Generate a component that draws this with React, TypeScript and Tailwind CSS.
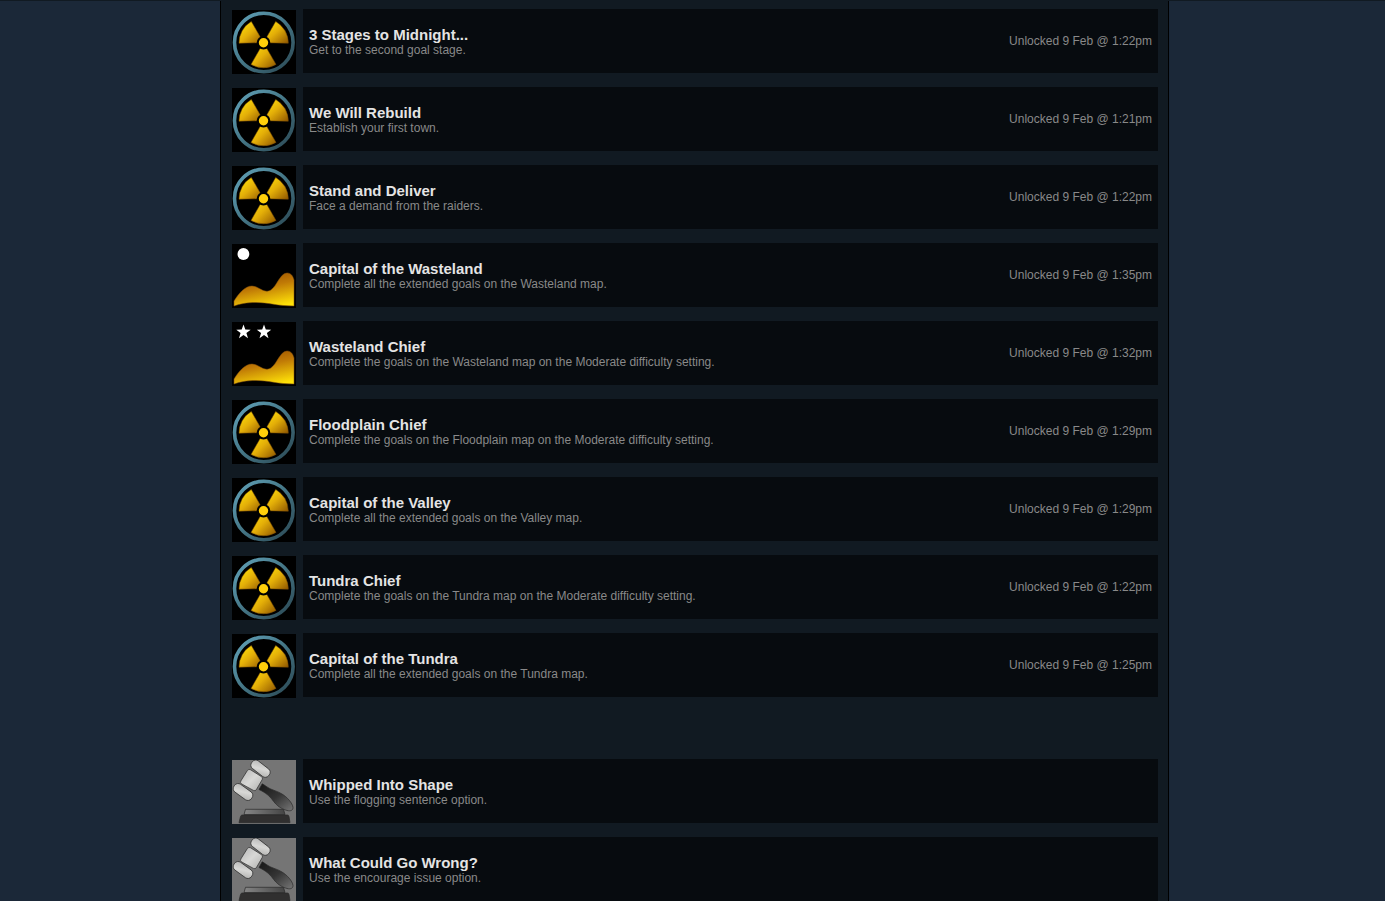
import { useId } from "react";

type IconName = "radiation" | "moon" | "stars" | "gavel";

type Achievement = {
  icon: IconName;
  title: string;
  description: string;
  unlocked?: string;
};

const unlockedList: Achievement[] = [
  { icon: "radiation", title: "3 Stages to Midnight...", description: "Get to the second goal stage.", unlocked: "9 Feb @ 1:22pm" },
  { icon: "radiation", title: "We Will Rebuild", description: "Establish your first town.", unlocked: "9 Feb @ 1:21pm" },
  { icon: "radiation", title: "Stand and Deliver", description: "Face a demand from the raiders.", unlocked: "9 Feb @ 1:22pm" },
  { icon: "moon", title: "Capital of the Wasteland", description: "Complete all the extended goals on the Wasteland map.", unlocked: "9 Feb @ 1:35pm" },
  { icon: "stars", title: "Wasteland Chief", description: "Complete the goals on the Wasteland map on the Moderate difficulty setting.", unlocked: "9 Feb @ 1:32pm" },
  { icon: "radiation", title: "Floodplain Chief", description: "Complete the goals on the Floodplain map on the Moderate difficulty setting.", unlocked: "9 Feb @ 1:29pm" },
  { icon: "radiation", title: "Capital of the Valley", description: "Complete all the extended goals on the Valley map.", unlocked: "9 Feb @ 1:29pm" },
  { icon: "radiation", title: "Tundra Chief", description: "Complete the goals on the Tundra map on the Moderate difficulty setting.", unlocked: "9 Feb @ 1:22pm" },
  { icon: "radiation", title: "Capital of the Tundra", description: "Complete all the extended goals on the Tundra map.", unlocked: "9 Feb @ 1:25pm" },
];

const lockedList: Achievement[] = [
  { icon: "gavel", title: "Whipped Into Shape", description: "Use the flogging sentence option." },
  { icon: "gavel", title: "What Could Go Wrong?", description: "Use the encourage issue option." },
];

function RadiationIcon() {
  const id = useId();
  return (
    <svg viewBox="0 0 64 64" className="size-16 bg-black" aria-hidden="true">
      <defs>
        <linearGradient id={id + "blade"} x1="0" y1="0" x2="1" y2="1">
          <stop offset="0.1" stopColor="#ffdf0a" />
          <stop offset="0.5" stopColor="#e3ae08" />
          <stop offset="1" stopColor="#8f5600" />
        </linearGradient>
        <linearGradient id={id + "ring"} x1="0" y1="0" x2="1" y2="1">
          <stop offset="0" stopColor="#62a3ba" />
          <stop offset="0.5" stopColor="#447585" />
          <stop offset="1" stopColor="#2a4651" />
        </linearGradient>
      </defs>
      <circle cx="31.8" cy="32.5" r="29.3" fill="none" stroke={`url(#${id}ring)`} strokeWidth="3.6" />
      <g fill={`url(#${id}blade)`} stroke="#7a4c04" strokeWidth="0.5">
        <path d="M31.5 32.7 7 33.2A25 25 0 0 1 19.3 11.4Z" />
        <path d="M31.5 32.7 43.7 11.4A25 25 0 0 1 56.3 33.2Z" />
        <path d="M31.5 32.7 44 54.4A25 25 0 0 1 19 54.4Z" />
      </g>
      <circle cx="31.5" cy="32.7" r="6.8" fill="#000" />
      <circle cx="31.5" cy="32.7" r="4.7" fill="#ffcf0a" />
    </svg>
  );
}

function DesertIcon({ stars }: { stars?: boolean }) {
  const id = useId();
  const star = "0,-7.6 1.8,-2.4 7.2,-2.3 2.9,1 4.5,6.2 0,3.1 -4.5,6.2 -2.9,1 -7.2,-2.3 -1.8,-2.4";
  return (
    <svg viewBox="0 0 64 64" className="size-16 bg-black" aria-hidden="true">
      <defs>
        <linearGradient id={id} x1="0.4" y1="0.1" x2="0.75" y2="1">
          <stop offset="0" stopColor="#a35a00" />
          <stop offset="0.35" stopColor="#c07a06" />
          <stop offset="1" stopColor="#ffe208" />
        </linearGradient>
      </defs>
      {stars ? (
        <g fill="#fff">
          <polygon points={star} transform="translate(11.5 10)" />
          <polygon points={star} transform="translate(32 10)" />
        </g>
      ) : (
        <circle cx="11.4" cy="10" r="5.9" fill="#fff" />
      )}
      <path
        d="M2 62V57C7 49 13 42 20 42C26 42 29 47 35 47.3C44 47 47 29 55 29C59 29 61 32 62 36V62C46 62 36 58.5 24 58.5C14 58.5 8 60 2 62Z"
        fill={`url(#${id})`}
        stroke="#84500c"
        strokeWidth="0.5"
      />
    </svg>
  );
}

function GavelIcon() {
  const id = useId();
  return (
    <svg viewBox="0 0 64 64" className="size-16 bg-[#757575]" aria-hidden="true">
      <defs>
        <linearGradient id={id + "head"} x1="0" y1="0" x2="1" y2="1">
          <stop offset="0" stopColor="#b4b4b4" />
          <stop offset="0.5" stopColor="#d8d8d6" />
          <stop offset="1" stopColor="#b0b0ae" />
        </linearGradient>
        <linearGradient id={id + "handle"} x1="0" y1="0" x2="1" y2="1">
          <stop offset="0" stopColor="#161616" />
          <stop offset="0.5" stopColor="#343434" />
          <stop offset="1" stopColor="#777" />
        </linearGradient>
        <linearGradient id={id + "base"}>
          <stop offset="0" stopColor="#868686" />
          <stop offset="1" stopColor="#444" />
        </linearGradient>
      </defs>
      <g stroke="#2a2a2a" strokeWidth="0.7" strokeLinejoin="round">
        <path d="M13.5 49.3H51.5L53 54.5H12Z" fill={`url(#${id}base)`} />
        <path d="M10 55H55.5Q56.8 55 57 56.5L58 62.7H7L8.5 56.5Q9 55 10 55Z" fill="#302f2f" />
        <path d="M30.2 23.8C33 25 35 27.5 38 28.7C42 30.5 46 31.5 50 34C55 37 60.5 43 61 47.5C61 51 57.5 51.5 53.5 50C47 47.8 43.5 44 40.5 40C37.5 36 34 33 27 29.5Z" fill={`url(#${id}handle)`} />
        <path d="M15.5 10.3Q16.8 8.7 18.6 9.8L29.4 16.6Q31.2 17.8 30.2 19.6L24.4 29.6Q23.3 31.4 21.4 30.4L9.6 23.9Q7.8 22.8 8.8 21Z" fill={`url(#${id}head)`} />
        <rect x="-10.7" y="-4.8" width="21.4" height="9.6" rx="4.2" transform="translate(28.5 8.7) rotate(38)" fill={`url(#${id}head)`} />
        <rect x="-10.7" y="-4.8" width="21.4" height="9.6" rx="4.2" transform="translate(11 32) rotate(36)" fill={`url(#${id}head)`} />
      </g>
    </svg>
  );
}

function AchievementIcon({ name }: { name: IconName }) {
  if (name === "gavel") return <GavelIcon />;
  if (name === "moon") return <DesertIcon />;
  if (name === "stars") return <DesertIcon stars />;
  return <RadiationIcon />;
}

function AchievementRow({ icon, title, description, unlocked }: Achievement) {
  return (
    <li className="flex items-stretch gap-[7px]">
      <div className="shrink-0 pt-px">
        <AchievementIcon name={icon} />
      </div>
      <div className="mb-px flex flex-1 items-center justify-between gap-4 bg-[#070b0f] px-[6px]">
        <div className="pt-px">
          <h3 className="text-[15px] leading-4 font-bold text-[#e4e4e4]">{title}</h3>
          <p className="text-[12px] leading-[14px] text-[#898989]">{description}</p>
        </div>
        {unlocked && <p className="shrink-0 text-[12px] leading-[14px] text-[#898989]">Unlocked {unlocked}</p>}
      </div>
    </li>
  );
}

function AchievementList({ items }: { items: Achievement[] }) {
  return (
    <ul className="flex flex-col gap-[13px]">
      {items.map((item) => (
        <AchievementRow key={item.title} {...item} />
      ))}
    </ul>
  );
}

export default function App() {
  return (
    <div className="h-screen overflow-y-auto border-t border-[#111a22] bg-[#1b2838] pl-1 font-['Liberation_Sans',Arial,sans-serif] [scrollbar-width:none]">
      <main className="mx-auto flex min-h-full max-w-[949px] flex-col gap-[61px] border-x border-black bg-[#111a22] pt-2 pr-[10px] pl-[11px]">
        <AchievementList items={unlockedList} />
        <AchievementList items={lockedList} />
      </main>
    </div>
  );
}
